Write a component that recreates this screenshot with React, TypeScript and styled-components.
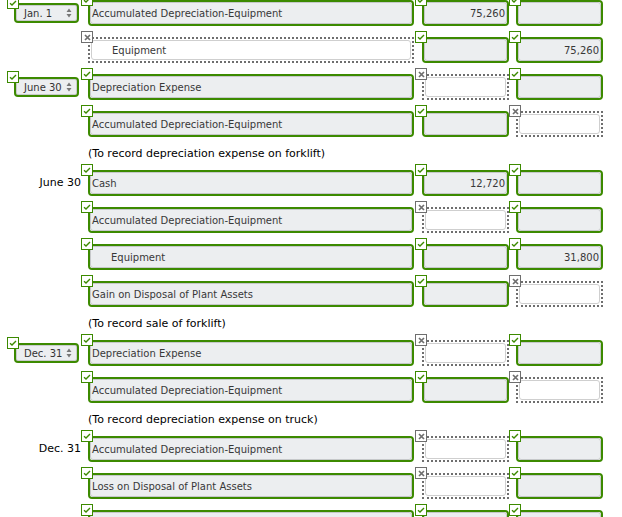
import React from "react";
import styled, { createGlobalStyle } from "styled-components";

const GlobalStyle = createGlobalStyle`
  body {
    margin: 0;
    background: #fff;
    font-family: "DejaVu Sans", Verdana, sans-serif;
  }
`;

const GREEN = "#3c8a00";

const Sheet = styled.div`
  display: flex;
  flex-direction: column;
  gap: 11px;
  width: 622px;
`;

const Row = styled.div`
  display: flex;
  align-items: flex-start;
  height: 26px;
`;

const DateCell = styled.div`
  position: relative;
  width: 88px;
  height: 26px;
  flex-shrink: 0;
`;

const DateLabel = styled.div`
  padding: 6px 7px 0 0;
  text-align: right;
  font-size: 11px;
  line-height: 13px;
  color: #000;
`;

const DateSelect = styled.div`
  position: relative;
  margin: 3px 0 0 14px;
  width: 65px;
  height: 20px;
  box-sizing: border-box;
  border: 2px solid ${GREEN};
  border-radius: 4px;
  background: #eceef0;
  box-shadow: inset 0 0 0 1px #c9cbcd;
  display: flex;
  align-items: center;
  justify-content: space-between;
  padding: 0 5px 0 8px;
  font-size: 10px;
  color: #333;
`;

const Field = styled.div<{ $w: number; $ml: number; $bad?: boolean }>`
  position: relative;
  width: ${(p) => p.$w}px;
  margin-left: ${(p) => p.$ml}px;
  height: 26px;
  flex-shrink: 0;
  box-sizing: border-box;
  border: ${(p) => (p.$bad ? "2px dotted #6e6e6e" : `2px solid ${GREEN}`)};
  border-radius: ${(p) => (p.$bad ? "0" : "4px")};
  padding: ${(p) => (p.$bad ? "1px" : "0")};
`;

const FieldInner = styled.div<{ $bad?: boolean; $indent?: boolean; $num?: boolean }>`
  height: 100%;
  box-sizing: border-box;
  border: 1px solid ${(p) => (p.$bad ? "#cfcfcf" : "#c6c8ca")};
  border-radius: 3px;
  background: ${(p) => (p.$bad ? "#fff" : "#eceef0")};
  display: flex;
  align-items: center;
  justify-content: ${(p) => (p.$num ? "flex-end" : "flex-start")};
  padding: ${(p) => (p.$indent ? "0 4px 0 20px" : "0 1px 0 1px")};
  font-size: 10px;
  color: #383838;
  white-space: nowrap;
  overflow: hidden;
`;

const Mark = styled.span<{ $bad?: boolean }>`
  position: absolute;
  left: -9px;
  top: -8px;
  width: 12px;
  height: 12px;
  box-sizing: border-box;
  border: 1px solid ${(p) => (p.$bad ? "#6e6e6e" : GREEN)};
  background: #fff;
  display: flex;
  align-items: center;
  justify-content: center;
  z-index: 2;
`;

const Note = styled.div`
  height: 11px;
  padding-left: 88px;
  font-size: 11px;
  line-height: 11px;
  color: #000;
`;

const Check = () => (
  <svg width="8" height="6" viewBox="0 0 8 6">
    <polyline points="1,3.2 3,5 7,1" fill="none" stroke={GREEN} strokeWidth="1.4" />
  </svg>
);

const Cross = () => (
  <svg width="7" height="7" viewBox="0 0 7 7">
    <path d="M1 1 L6 6 M6 1 L1 6" stroke="#6e6e6e" strokeWidth="1.7" />
  </svg>
);

const Arrows = () => (
  <svg width="6" height="10" viewBox="0 0 6 10">
    <path d="M3 0.5 L5.5 4 L0.5 4 Z M3 9.5 L5.5 6 L0.5 6 Z" fill="#777" />
  </svg>
);

type Entry =
  | { kind: "note"; text: string }
  | {
      kind: "row";
      date?: string;
      select?: boolean;
      account: string;
      indent?: boolean;
      accBad?: boolean;
      debit?: string;
      debitBad?: boolean;
      credit?: string;
      creditBad?: boolean;
    };

const ACC = "Accumulated Depreciation-Equipment";

const entries: Entry[] = [
  { kind: "row", date: "Jan. 1", select: true, account: ACC, debit: "75,260" },
  { kind: "row", account: "Equipment", indent: true, accBad: true, credit: "75,260" },
  { kind: "row", date: "June 30", select: true, account: "Depreciation Expense", debitBad: true },
  { kind: "row", account: ACC, creditBad: true },
  { kind: "note", text: "(To record depreciation expense on forklift)" },
  { kind: "row", date: "June 30", account: "Cash", debit: "12,720" },
  { kind: "row", account: ACC, debitBad: true },
  { kind: "row", account: "Equipment", indent: true, credit: "31,800" },
  { kind: "row", account: "Gain on Disposal of Plant Assets", creditBad: true },
  { kind: "note", text: "(To record sale of forklift)" },
  { kind: "row", date: "Dec. 31", select: true, account: "Depreciation Expense", debitBad: true },
  { kind: "row", account: ACC, creditBad: true },
  { kind: "note", text: "(To record depreciation expense on truck)" },
  { kind: "row", date: "Dec. 31", account: ACC, debitBad: true },
  { kind: "row", account: "Loss on Disposal of Plant Assets", debitBad: true },
  { kind: "row", account: "" },
];

const Cell = ({
  w,
  ml,
  bad,
  text,
  indent,
  num,
}: {
  w: number;
  ml: number;
  bad?: boolean;
  text?: string;
  indent?: boolean;
  num?: boolean;
}) => (
  <Field $w={w} $ml={ml} $bad={bad}>
    <Mark $bad={bad}>{bad ? <Cross /> : <Check />}</Mark>
    <FieldInner $bad={bad} $indent={indent} $num={num}>
      {text}
    </FieldInner>
  </Field>
);

export default function App() {
  return (
    <>
      <GlobalStyle />
      <Sheet>
        {entries.map((e, i) =>
          e.kind === "note" ? (
            <Note key={i}>{e.text}</Note>
          ) : (
            <Row key={i}>
              <DateCell>
                {e.date && e.select && (
                  <DateSelect>
                    <Mark>
                      <Check />
                    </Mark>
                    <span>{e.date}</span>
                    <Arrows />
                  </DateSelect>
                )}
                {e.date && !e.select && <DateLabel>{e.date}</DateLabel>}
              </DateCell>
              <Cell w={326} ml={0} bad={e.accBad} text={e.account} indent={e.indent} />
              <Cell w={87} ml={8} bad={e.debitBad} text={e.debit} num />
              <Cell w={87} ml={7} bad={e.creditBad} text={e.credit} num />
            </Row>
          )
        )}
      </Sheet>
    </>
  );
}
